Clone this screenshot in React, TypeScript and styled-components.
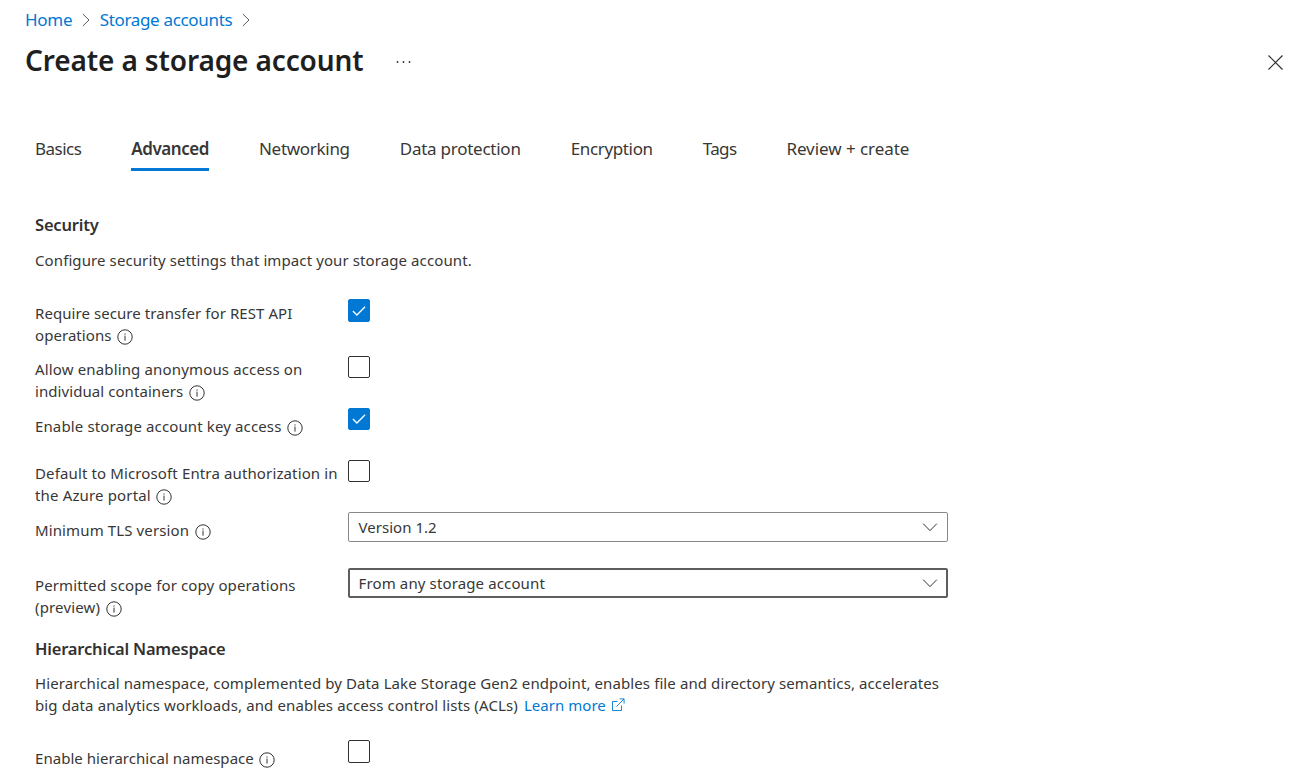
import React from "react";
import styled, { createGlobalStyle } from "styled-components";

const GlobalStyle = createGlobalStyle`
  * { box-sizing: border-box; }
  body {
    margin: 0;
    background: #fff;
    color: #383736;
    font-family: "Noto Sans", "Open Sans", sans-serif;
    font-size: 15px;
    line-height: 22px;
  }
`;

const Page = styled.div`
  height: 782px;
  overflow: hidden;
`;

const Breadcrumb = styled.nav`
  display: flex;
  align-items: center;
  height: 40px;
  padding-left: 25px;
  font-size: 17px;
`;

const Crumb = styled.a<{ $track?: number }>`
  color: #0078d4;
  white-space: nowrap;
  letter-spacing: ${(p) => p.$track ?? 0}px;
`;

const CrumbArrow = styled.svg`
  width: 8px;
  height: 14px;
  margin: 0 10px 0 9.5px;
`;

const TitleBar = styled.header`
  display: flex;
  align-items: center;
  height: 44px;
  padding: 0 11px 0 25px;
`;

const Title = styled.h1`
  margin: 0;
  padding-bottom: 5px;
  color: #1f1f1f;
  font-size: 28px;
  line-height: 36px;
  font-weight: 600;
  white-space: nowrap;
  letter-spacing: -0.12px;
`;

const MoreIcon = styled.svg`
  width: 15px;
  height: 4px;
  margin-left: 32px;
`;

const CloseIcon = styled.svg`
  width: 15px;
  height: 15px;
  margin-left: auto;
`;

const TabList = styled.div`
  display: flex;
  gap: 50px;
  height: 44px;
  margin-top: 43px;
  padding-left: 35px;
`;

const Tab = styled.div<{ $active?: boolean; $track?: number }>`
  height: 44px;
  line-height: 43px;
  font-size: 17px;
  white-space: nowrap;
  font-weight: ${(p) => (p.$active ? 600 : 400)};
  letter-spacing: ${(p) => p.$track ?? 0}px;
  border-bottom: 3px solid ${(p) => (p.$active ? "#0078d4" : "transparent")};
`;

const Content = styled.main`
  width: 948px;
  padding: 43px 0 0 35px;
`;

const SectionTitle = styled.h2`
  margin: 0;
  color: #323130;
  font-size: 16.5px;
  line-height: 22px;
  font-weight: 600;
  letter-spacing: -0.19px;
`;

const Paragraph = styled.div<{ $top: number; $bottom: number }>`
  margin: ${(p) => p.$top}px 0 ${(p) => p.$bottom}px;
`;

const Line = styled.div<{ $track?: number }>`
  display: flex;
  align-items: center;
  height: 22px;
  white-space: nowrap;
  letter-spacing: ${(p) => p.$track ?? 0}px;
`;

const FieldRow = styled.div<{ $height: number }>`
  display: grid;
  grid-template-columns: 313px 600px;
  align-items: start;
  height: ${(p) => p.$height}px;
`;

const FieldLabel = styled.div<{ $top: number }>`
  padding-top: ${(p) => p.$top}px;
`;

const InfoSvg = styled.svg`
  width: 16px;
  height: 16px;
  margin: 3px 0 0 5.5px;
`;

const Box = styled.div<{ $checked?: boolean; $tall?: boolean }>`
  display: flex;
  align-items: center;
  justify-content: center;
  width: 22px;
  height: ${(p) => (p.$tall ? 23 : 22)}px;
  border-radius: 2px;
  border: 1px solid ${(p) => (p.$checked ? "#0078d4" : "#323130")};
  background: ${(p) => (p.$checked ? "#0078d4" : "#fff")};
`;

const Select = styled.div<{ $focused?: boolean; $track?: number }>`
  display: flex;
  align-items: center;
  justify-content: space-between;
  height: 30px;
  padding: ${(p) => (p.$focused ? "0 8px 0 8.5px" : "0 9px 0 9.5px")};
  border: ${(p) => (p.$focused ? "2px solid #605e5c" : "1px solid #8a8886")};
  border-radius: 2px;
  letter-spacing: ${(p) => p.$track ?? 0}px;
`;

const Chevron = styled.svg`
  width: 16px;
  height: 10px;
`;

const LearnMore = styled.a`
  margin-left: 6px;
  color: #0078d4;
  letter-spacing: 0.04px;
`;

const ExternalIcon = styled.svg`
  width: 14px;
  height: 14px;
  margin: -1px 0 0 5px;
`;

const Arrow = () => (
  <CrumbArrow viewBox="0 0 8 14" fill="none" stroke="#605e5c">
    <path d="M0.8 1L7 7L0.8 13" />
  </CrumbArrow>
);

const Info = () => (
  <InfoSvg viewBox="0 0 16 16" fill="none" stroke="#323130">
    <circle cx="8" cy="8" r="7.2" />
    <path d="M8 6.6V11.6M8 4.4V5.6" />
  </InfoSvg>
);

const Checkbox = ({ checked, tall }: { checked?: boolean; tall?: boolean }) => (
  <Box $checked={checked} $tall={tall}>
    {checked && (
      <svg width="14" height="10" viewBox="0 0 14 10" fill="none" stroke="#fff" strokeWidth="1.3">
        <path d="M0.9 5L4.9 9L13.1 0.8" />
      </svg>
    )}
  </Box>
);

const Dropdown = ({ value, focused, track }: { value: string; focused?: boolean; track?: number }) => (
  <Select $focused={focused} $track={track}>
    {value}
    <Chevron viewBox="0 0 16 10" fill="none" stroke="#323130">
      <path d="M1.2 1.7L8 8.6L14.8 1.7" />
    </Chevron>
  </Select>
);

type FieldProps = {
  height: number;
  top: number;
  lines: [string, number][];
  children: React.ReactNode;
};

const Field = ({ height, top, lines, children }: FieldProps) => (
  <FieldRow $height={height}>
    <FieldLabel $top={top}>
      {lines.map(([text, track], i) => (
        <Line key={text} $track={track}>
          {text}
          {i === lines.length - 1 && <Info />}
        </Line>
      ))}
    </FieldLabel>
    {children}
  </FieldRow>
);

const tabs: { label: string; track: number; active?: boolean }[] = [
  { label: "Basics", track: -0.52 },
  { label: "Advanced", track: -0.45, active: true },
  { label: "Networking", track: -0.3 },
  { label: "Data protection", track: -0.25 },
  { label: "Encryption", track: -0.35 },
  { label: "Tags", track: -0.65 },
  { label: "Review + create", track: -0.05 },
];

export default function App() {
  return (
    <Page>
      <GlobalStyle />
      <Breadcrumb>
        <Crumb $track={-0.3}>Home</Crumb>
        <Arrow />
        <Crumb $track={-0.33}>Storage accounts</Crumb>
        <Arrow />
      </Breadcrumb>
      <TitleBar>
        <Title>Create a storage account</Title>
        <MoreIcon viewBox="0 0 15 4" fill="#323130">
          <circle cx="1.5" cy="2" r="0.9" />
          <circle cx="7.5" cy="2" r="0.9" />
          <circle cx="13.5" cy="2" r="0.9" />
        </MoreIcon>
        <CloseIcon viewBox="0 0 15 15" stroke="#323130" strokeWidth="1.2">
          <path d="M0.5 0.5L14.5 14.5M14.5 0.5L0.5 14.5" />
        </CloseIcon>
      </TitleBar>
      <TabList>
        {tabs.map((t) => (
          <Tab key={t.label} $active={t.active} $track={t.track}>
            {t.label}
          </Tab>
        ))}
      </TabList>
      <Content>
        <SectionTitle>Security</SectionTitle>
        <Paragraph $top={13} $bottom={28}>
          <Line $track={0.1}>Configure security settings that impact your storage account.</Line>
        </Paragraph>
        <Field height={57} top={3} lines={[["Require secure transfer for REST API", 0.07], ["operations", 0.06]]}>
          <Checkbox checked tall />
        </Field>
        <Field height={52} top={2} lines={[["Allow enabling anonymous access on", 0.15], ["individual containers", 0.07]]}>
          <Checkbox />
        </Field>
        <Field height={52} top={7} lines={[["Enable storage account key access", 0.13]]}>
          <Checkbox checked />
        </Field>
        <Field height={52} top={2} lines={[["Default to Microsoft Entra authorization in", 0.13], ["the Azure portal", 0.15]]}>
          <Checkbox />
        </Field>
        <Field height={56} top={7} lines={[["Minimum TLS version", 0.12]]}>
          <Dropdown value="Version 1.2" track={0.03} />
        </Field>
        <Field height={70} top={6} lines={[["Permitted scope for copy operations", 0.13], ["(preview)", 0.15]]}>
          <Dropdown value="From any storage account" focused track={0.13} />
        </Field>
        <SectionTitle>Hierarchical Namespace</SectionTitle>
        <Paragraph $top={12} $bottom={24}>
          <Line $track={0.1}>Hierarchical namespace, complemented by Data Lake Storage Gen2 endpoint, enables file and directory semantics, accelerates</Line>
          <Line $track={0.12}>
            big data analytics workloads, and enables access control lists (ACLs)
            <LearnMore>Learn more</LearnMore>
            <ExternalIcon viewBox="0 0 14 14" fill="none" stroke="#0078d4" strokeWidth="0.9">
              <path d="M6.5 3.5H1.5V12.5H10.5V7.5M5.5 8.5L13 1M8.5 0.9H13.1V5.5" />
            </ExternalIcon>
          </Line>
        </Paragraph>
        <Field height={42} top={7} lines={[["Enable hierarchical namespace", 0.04]]}>
          <Checkbox tall />
        </Field>
      </Content>
    </Page>
  );
}
